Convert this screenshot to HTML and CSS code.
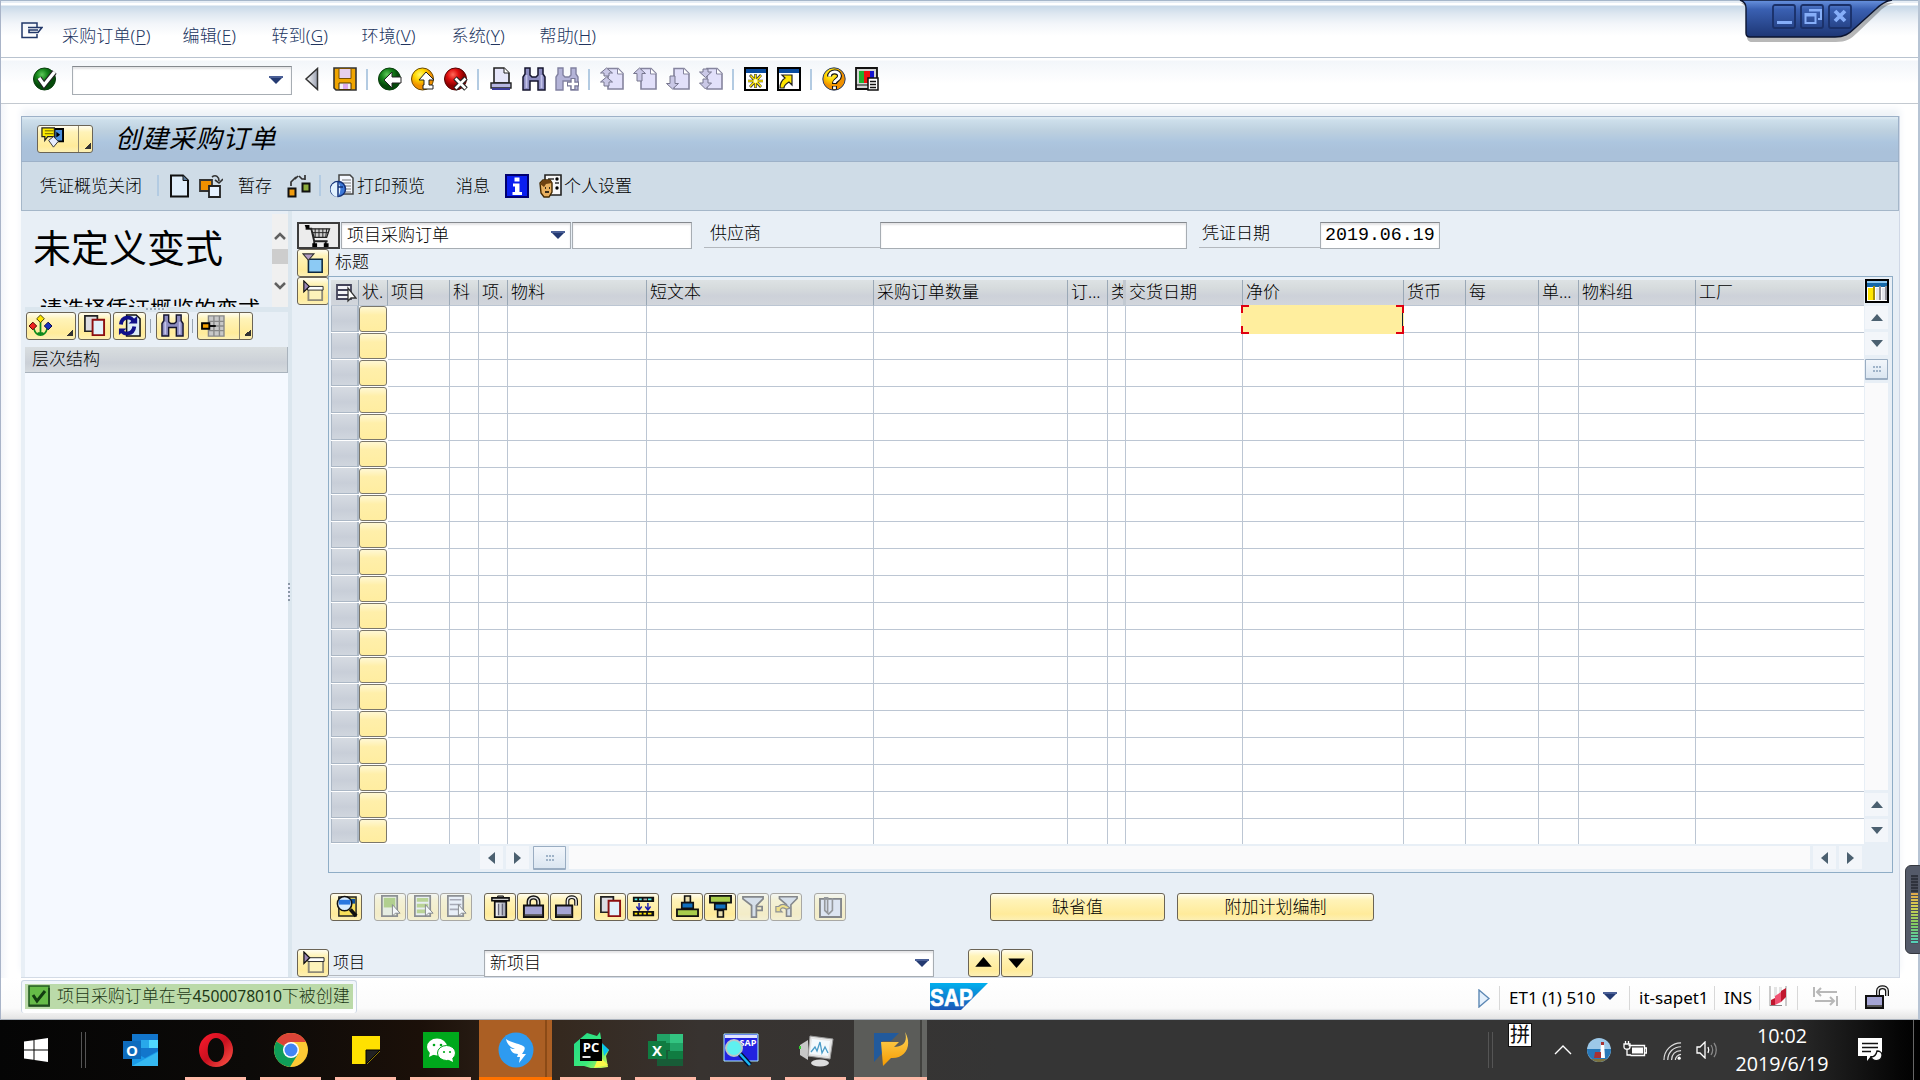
FILE: index.html
```html
<!DOCTYPE html>
<html lang="zh-CN">
<head>
<meta charset="utf-8">
<title>创建采购订单</title>
<link rel="stylesheet" href="styles.css">
</head>
<body>
<svg class="defs" width="0" height="0" aria-hidden="true">
  <defs>
    <radialGradient id="gGreen" cx=".38" cy=".3"><stop offset="0" stop-color="#5fc95a"/><stop offset=".5" stop-color="#16861b"/><stop offset="1" stop-color="#054a0a"/></radialGradient>
    <radialGradient id="gYellow" cx=".38" cy=".3"><stop offset="0" stop-color="#fff76a"/><stop offset=".5" stop-color="#ffd800"/><stop offset="1" stop-color="#f09000"/></radialGradient>
    <radialGradient id="gRed" cx=".38" cy=".3"><stop offset="0" stop-color="#ff6b5a"/><stop offset=".5" stop-color="#e01010"/><stop offset="1" stop-color="#8c0000"/></radialGradient>
    <linearGradient id="gSap" x1="0" y1="0" x2="0" y2="1"><stop offset="0" stop-color="#00b0ee"/><stop offset="1" stop-color="#1c56b6"/></linearGradient>
    <linearGradient id="gTab" x1="0" y1="0" x2="0" y2="1"><stop offset="0" stop-color="#6a94e0"/><stop offset=".25" stop-color="#3a60b2"/><stop offset="1" stop-color="#1d3674"/></linearGradient>
    <linearGradient id="gOpera" x1="0" y1="0" x2="1" y2="1"><stop offset="0" stop-color="#ff1b2d"/><stop offset=".5" stop-color="#c8101f"/><stop offset="1" stop-color="#ff5a4a"/></linearGradient>
    <linearGradient id="gGold" x1="0" y1="0" x2="0" y2="1"><stop offset="0" stop-color="#ffd65a"/><stop offset="1" stop-color="#f59a00"/></linearGradient>
    <linearGradient id="gPy" x1="0" y1="0" x2="1" y2="1"><stop offset="0" stop-color="#21d789"/><stop offset=".6" stop-color="#3bea7a"/><stop offset="1" stop-color="#fcf84a"/></linearGradient>
    <linearGradient id="gMetal" x1="0" y1="0" x2="1" y2="0"><stop offset="0" stop-color="#fff"/><stop offset="1" stop-color="#9aa0b0"/></linearGradient>
    <symbol id="ok" viewBox="0 0 24 24"><circle cx="11.500" cy="12" r="11" fill="url(#gGreen)" stroke="#063c0a"/><path d="M6 11l5 7L21.500 5" fill="none" stroke="#222" stroke-width="5.500"/><path d="M6 11l5 7L21.500 5" fill="none" stroke="#fff" stroke-width="3.400"/></symbol>
    <symbol id="back" viewBox="0 0 24 24"><path d="M17.500 1.500v21L6 12z" fill="url(#gMetal)" stroke="#333" stroke-width="1.500"/></symbol>
    <symbol id="save" viewBox="0 0 24 24"><path d="M1 1h22v22H3l-2-2z" fill="#f0a500" stroke="#333" stroke-width="1.600"/><path d="M6 1.500h12v10H6z" fill="#e6d0ec" stroke="#7a5200"/><path d="M6 16h12v6.500H6z" fill="#f5eef5" stroke="#4a3200"/><path d="M10 17h5v5h-5z" fill="#dca8ec"/></symbol>
    <symbol id="gback" viewBox="0 0 24 24"><circle cx="11.500" cy="12" r="11" fill="url(#gGreen)" stroke="#063c0a"/><path d="M6 13l8-8v5h9v6h-9v5z" fill="#fff" stroke="#222"/></symbol>
    <symbol id="yup" viewBox="0 0 24 24"><circle cx="11.500" cy="12" r="11" fill="url(#gYellow)" stroke="#6a4a00"/><path d="M15 5l8 8h-5v5h4v4H12v-4h1v-5H8z" fill="#fff" stroke="#222"/></symbol>
    <symbol id="rx" viewBox="0 0 24 24"><circle cx="11.500" cy="12" r="11" fill="url(#gRed)" stroke="#500"/><path d="M11 11l11 11M22 11L11 22" stroke="#222" stroke-width="5"/><path d="M11.500 11.500l10 10M21.500 11.500l-10 10" stroke="#fff" stroke-width="2.700"/></symbol>
    <symbol id="print" viewBox="0 0 24 24"><path d="M5 1h10l5 5v10H5z" fill="#e6e6fa" stroke="#222" stroke-width="1.600"/><path d="M15 1v5h5" fill="#fff" stroke="#222"/><path d="M2 16h20v5H2z" fill="#b6b6e0" stroke="#222" stroke-width="1.400"/><path d="M3 21h18v2H3z" fill="#3c3c98"/></symbol>
    <symbol id="find" viewBox="0 0 24 24"><path d="M3 1h5v7l2 2h4l2-2V1h5v6l2 3v13h-7v-9H8v9H1V10l2-3z" fill="#8c8cc0" stroke="#15152e" stroke-width="1.500"/><path d="M4.500 8v13M19.500 8v13" stroke="#c4c4ea" stroke-width="1.800"/></symbol>
    <symbol id="findp" viewBox="0 0 24 24"><path d="M3 1h5v7l2 2h4l2-2V1h5v6l2 3v13h-7v-9H8v9H1V10l2-3z" fill="#b4b4d8" stroke="#8080a0" stroke-width="1.400"/><path d="M18 11v12M12 17h12" stroke="#777796" stroke-width="5"/><path d="M18 12v10M13 17h10" stroke="#fff" stroke-width="2.600"/></symbol>
    <symbol id="pg" viewBox="0 0 24 24"><path d="M8 1.500h10l5 5V22H8z" fill="#e2e0fa" stroke="#85849e" stroke-width="1.600"/><path d="M17.500 1.500v5.500H23" fill="#fff" stroke="#85849e"/></symbol>
    <symbol id="p1" viewBox="0 0 24 24"><use href="#pg"/><path d="M6.500 1l6 5H9v3H4V6H.5zM6.500 10l6 5H9v4H4v-4H.5z" fill="#cac8e6" stroke="#77768e"/></symbol>
    <symbol id="p2" viewBox="0 0 24 24"><use href="#pg"/><path d="M6.500 1l6 5.500H9V14H4V6.500H.5z" fill="#cac8e6" stroke="#77768e"/></symbol>
    <symbol id="p3" viewBox="0 0 24 24"><use href="#pg"/><path d="M6.500 22l6-5.500H9V9H4v7.500H.5z" fill="#cac8e6" stroke="#77768e"/></symbol>
    <symbol id="p4" viewBox="0 0 24 24"><use href="#pg"/><path d="M4 2h5v3h3.500l-6 5.500L.5 5H4zM4 12h5v4h3.500l-6 6-6-6H4z" fill="#cac8e6" stroke="#77768e"/></symbol>
    <symbol id="w1" viewBox="0 0 24 24"><path d="M1 1h22v22H1z" fill="#fff" stroke="#000" stroke-width="2"/><path d="M2 2h20v4H2z" fill="#0a4ca0"/><path d="M11.500 7v14M4 14h15M6 8l11 12M17 8L6 20" stroke="#333" stroke-width="2.600"/><path d="M11.500 7.500v13M4 14h15M6.500 8.500l10.500 11M17 8.500L6 19.500" stroke="#ffe600" stroke-width="1.500"/><circle cx="11.500" cy="14" r="2" fill="#ffffc0"/></symbol>
    <symbol id="w2" viewBox="0 0 24 24"><path d="M1 1h22v22H1z" fill="#fff" stroke="#000" stroke-width="2"/><path d="M2 2h20v4H2z" fill="#0a4ca0"/><path d="M3 21c0-6 2-8 5-10l-3-3h10v10l-3-3c-3 2-5 3-5 6z" fill="#ffe600" stroke="#222" stroke-width="1.200"/></symbol>
    <symbol id="help" viewBox="0 0 24 24"><circle cx="12" cy="12" r="11.2" fill="url(#gYellow)" stroke="#27406e"/><path d="M7.500 9.500c0-6 10-6 10-.5 0 4-5 3.500-5 8M12.500 19v3.500" fill="none" stroke="#111" stroke-width="5"/><path d="M7.500 9.500c0-6 10-6 10-.5 0 4-5 3.500-5 7M12.500 19.500v2.500" fill="none" stroke="#fff" stroke-width="2.800"/></symbol>
    <symbol id="mon" viewBox="0 0 24 24"><path d="M1 1h21v21H1z" fill="#d4d4d4" stroke="#111" stroke-width="1.800"/><path d="M4 4h5v12H4z" fill="#20b030"/><path d="M9 4h6v12H9z" fill="#f01010"/><path d="M15 4h4v12h-4z" fill="#1414d0"/><path d="M1 18h14" stroke="#111"/><path d="M13 11h10v12H13z" fill="#fff" stroke="#111" stroke-width="1.500"/><path d="M15 14.500h6M15 17.500h6M15 20.500h6" stroke="#111" stroke-width="1.300"/></symbol>
    <symbol id="svc" viewBox="0 0 24 24"><path d="M14 2h9v13h-9z" fill="#4a90e0" stroke="#000" stroke-width="2"/><path d="M16 5v6l4-3z"/><path d="M1 1h13v9H7l-3 4v-4H1z" fill="#ffed00" stroke="#222" stroke-width="1.300"/><path d="M4 4h9M4 7h9" stroke="#665c00"/><path d="M8 14l5-4 5 5-5 6z" fill="#e6ecff" stroke="#333"/></symbol>
    <symbol id="doc" viewBox="0 0 24 24"><path d="M3 1.500h12l5 5v16H3z" fill="#e0eefa" stroke="#111" stroke-width="2"/><path d="M15 1.500v5h5" fill="#5a7a9a" stroke="#111"/></symbol>
    <symbol id="hold" viewBox="0 0 24 24"><path d="M1 6h12v11H1z" fill="#f09000" stroke="#333" stroke-width="1.800"/><path d="M10 12h11v11H10z" fill="#e6f2ff" stroke="#222" stroke-width="1.800"/><path d="M13 3c4-3 7 0 7 4M16 6l4 3 4-4" fill="none" stroke="#333" stroke-width="1.600"/></symbol>
    <symbol id="chk" viewBox="0 0 24 24"><path d="M1.500 14.500h7v8h-7z" fill="#f09c10" stroke="#111" stroke-width="2"/><path d="M15.500 9.500h7v8h-7z" fill="#8cac3c" stroke="#111" stroke-width="2"/><path d="M4 12V8l5-5M8 5l3-3M12 2l3 3h3M18 6V1" fill="none" stroke="#333" stroke-width="1.700"/></symbol>
    <symbol id="prev" viewBox="0 0 24 24"><path d="M9 1h11l3 3v16H9z" fill="#f4f8ff" stroke="#444" stroke-width="1.500"/><path d="M12 6h9M12 9h9M15 12h6M15 15h6M15 18h6" stroke="#777"/><circle cx="8" cy="15" r="7.500" fill="#3c78d8" stroke="#123078" stroke-width="1.500"/><path d="M8 8a13 13 0 010 15 7.500 7.500 0 010-15" fill="#e2f2ff"/><path d="M8 8v15M8 13h5" stroke="#123078" stroke-width="1.500"/></symbol>
    <symbol id="info" viewBox="0 0 24 24"><path d="M1 1h22v22H1z" fill="#0a1ef0" stroke="#000070" stroke-width="2"/><path d="M9.500 3.500h5v4h-5zM8 9.500h6.500V18H17v3H7.500v-3H10v-5.500H8z" fill="#fff"/></symbol>
    <symbol id="pers" viewBox="0 0 24 24"><path d="M7 1h16v20H7z" fill="#f8f8f8" stroke="#222" stroke-width="1.600"/><path d="M10 5h6M17 9h4" stroke="#333" stroke-width="1.500"/><circle cx="19" cy="5" r="1.700"/><circle cx="19" cy="14" r="1.700"/><path d="M2 9l3-3h7l2 3v9l-3 5H6l-3-4z" fill="#e8b060" stroke="#422800" stroke-width="1.400"/><path d="M2 10l3-4h7l2 3-6 1-2 3z" fill="#6e4212"/><path d="M7 14h1M11 14h1M7 18h4" stroke="#000" stroke-width="1.500"/></symbol>
    <symbol id="cart" viewBox="0 0 32 24"><path d="M3 2v3h5l3 13h14M11 18v5M23 18v5" fill="none" stroke="#222" stroke-width="2"/><path d="M1 1h5v4H3z"/><path d="M8 5h19l-3 9H11z" fill="#ccc" stroke="#222" stroke-width="1.300"/><path d="M12 5v9M16 5v9M20 5v9M24 5l-1 9M9 9h17" stroke="#222"/><path d="M9 20h5v4H9zM21 20h5v4h-5z"/></symbol>
    <symbol id="exp" viewBox="0 0 24 24"><path d="M7 8h15v14H7z" fill="#8ccaf4" stroke="#0d2740" stroke-width="1.700"/><path d="M1 2h12L7 9z" fill="#b49cc4" stroke="#333" stroke-width="1.200"/></symbol>
    <symbol id="col" viewBox="0 0 24 24"><path d="M7 10h15v12H7z" fill="#fdf3ba" stroke="#8f8a78" stroke-width="2"/><path d="M6 7h17v4H6z" fill="#fff" stroke="#222"/><path d="M2 1v12l6-6z" fill="#9a86b4" stroke="#111" stroke-width="1.300"/></symbol>
    <symbol id="tree" viewBox="0 0 24 24"><path d="M12 7v16M5 15c1 4 3 7 7 7s6-3 7-7M9 20h6" fill="none" stroke="#0c8a1c" stroke-width="1.800"/><path d="M12 1l4 4-4 4-4-4z" fill="#ffe600" stroke="#443c00"/><path d="M4 8.500l4 4-4 4-4-4z" fill="#f02020" stroke="#400"/><path d="M20 8.500l4 4-4 4-4-4z" fill="#1830c0" stroke="#004"/></symbol>
    <symbol id="copy" viewBox="0 0 24 24"><path d="M2 2h13v16H2z" fill="#dcdce2" stroke="#222" stroke-width="1.800"/><path d="M10 6h12v16H10z" fill="#e2f2fc" stroke="#8c1010" stroke-width="2"/></symbol>
    <symbol id="refr" viewBox="0 0 24 24"><path d="M9 1h10l4 4v18H9z" fill="#dcebf6" stroke="#111" stroke-width="1.600"/><path d="M3 11c1-9 12-9 13-3M17 13c-1 9-12 9-13 4" fill="none" stroke="#10108a" stroke-width="4"/><path d="M11 10h9V2zM9 15H1v7z" fill="#10108a"/></symbol>
    <symbol id="layout" viewBox="0 0 28 24"><path d="M9 1h17v22H9z" fill="#c8c8c8" stroke="#888" stroke-width="1.500"/><path d="M9 7h17M9 12h17M9 17h17M15 1v22M21 1v22" stroke="#888" stroke-width="1.500"/><path d="M2 9h8v6H2z" fill="#f5a000" stroke="#000" stroke-width="2"/><path d="M10 12h7" stroke="#000" stroke-width="2"/></symbol>
    <symbol id="selall" viewBox="0 0 24 24"><path d="M4 4h14v14H4z" fill="#f4f4f8" stroke="#44445a" stroke-width="1.800"/><path d="M4 9h14M4 14h14" stroke="#44445a" stroke-width="2"/><path d="M15 7v13l3-3h5z" fill="#fff" stroke="#333" stroke-width="1.300"/></symbol>
    <symbol id="cfg" viewBox="0 0 24 24"><path d="M1 1h22v22H1z" fill="#fff" stroke="#000" stroke-width="2"/><path d="M2 2h20v2H2z" fill="#8fc8f0"/><path d="M2 4h20v4H2z" fill="#1468a8"/><path d="M3 9h5v12H3z" fill="#ffe600"/><path d="M8 7h2v14H8z" fill="#a89000"/><path d="M14 7h2v14h-2zM20 7h2v14h-2z" fill="#909098"/><path d="M11 9h3v12h-3zM17 9h3v12h-3z" fill="#e4e6ec"/></symbol>
    <symbol id="det" viewBox="0 0 24 24"><path d="M4 2h18v20H4z" fill="#f8e05a" stroke="#222" stroke-width="1.500"/><path d="M15 4h6v5h-6z" fill="#0c50a0"/><circle cx="10" cy="9" r="7.500" fill="#d8ecff" stroke="#111" stroke-width="1.600"/><path d="M4 5h12v5H4z" fill="#2a78e0"/><path d="M16 15l6 7" stroke="#111" stroke-width="4"/></symbol>
    <symbol id="s1" viewBox="0 0 24 24"><path d="M3 1h16v21H3z" fill="#e4ecd0" stroke="#333" stroke-width="1.800"/><path d="M5 3h12v10H5z" fill="#7cb02a"/><path d="M14 10v12l3-3h5z" fill="#fff" stroke="#222"/></symbol>
    <symbol id="s2" viewBox="0 0 24 24"><path d="M3 1h16v21H3z" fill="#e8eef0" stroke="#333" stroke-width="1.800"/><path d="M5 3h12v4H5zM5 9h12v4H5zM5 15h10v4H5z" fill="#8cb838"/><path d="M14 10v12l3-3h5z" fill="#fff" stroke="#222"/></symbol>
    <symbol id="s3" viewBox="0 0 24 24"><path d="M3 1h16v21H3z" fill="#e8f0fa" stroke="#333" stroke-width="1.800"/><path d="M5 5h12M5 10h12M5 15h10" stroke="#667" stroke-width="1.600"/><path d="M14 10v12l3-3h5z" fill="#fff" stroke="#222"/></symbol>
    <symbol id="del" viewBox="0 0 24 24"><path d="M9 1h6v3H9z" fill="#888" stroke="#111"/><path d="M3 3h18v3H3z" fill="#ccc" stroke="#111" stroke-width="1.600"/><path d="M6 7h12v16H6z" fill="url(#gMetal)" stroke="#111" stroke-width="1.800"/><path d="M10 9v12M14 9v12" stroke="#667" stroke-width="1.400"/></symbol>
    <symbol id="lock" viewBox="0 0 24 24"><path d="M7 12V7c0-6 10-6 10 0v5" fill="none" stroke="#111" stroke-width="4.500"/><path d="M7 12V7c0-6 10-6 10 0v5" fill="none" stroke="#ddd" stroke-width="1.600"/><path d="M2 11h20v12H2z" fill="#a4a4d4" stroke="#111" stroke-width="2"/><path d="M3 21h18" stroke="#555" stroke-width="2"/></symbol>
    <symbol id="unlock" viewBox="0 0 24 24"><path d="M13 12V6c0-5 9-5 9 0v5" fill="none" stroke="#111" stroke-width="4"/><path d="M13 12V6c0-5 9-5 9 0v5" fill="none" stroke="#eee" stroke-width="1.500"/><path d="M1 11h17v12H1z" fill="#a4a4d4" stroke="#111" stroke-width="2"/><path d="M2 21h15" stroke="#555" stroke-width="2"/></symbol>
    <symbol id="dup" viewBox="0 0 26 24"><path d="M1 1h24v6H1zM1 17h24v6H1z" fill="#111"/><path d="M3 3h3v2H3zM8 3h3v2H8zM18 3h4v2h-4z" fill="#5ee"/><path d="M13 3h4v2h-4z" fill="#aaa"/><path d="M3 19h3v2H3zM8 19h3v2H8zM13 19h3v2h-3zM18 19h4v2h-4z" fill="#ffe600"/><path d="M8 8v7M5 12l3 4 3-4M18 8v7M15 12l3 4 3-4" fill="none" stroke="#1818b0" stroke-width="1.600"/></symbol>
    <symbol id="asc" viewBox="0 0 24 24"><path d="M9 1h6v7H9z" fill="#e8deb0" stroke="#111" stroke-width="1.700"/><path d="M6 8h12v6H6z" fill="#1070c0" stroke="#111" stroke-width="1.700"/><path d="M1 15h22v7H1z" fill="#a8cc4c" stroke="#111" stroke-width="1.900"/></symbol>
    <symbol id="desc" viewBox="0 0 24 24"><path d="M9 16h6v7H9z" fill="#e8deb0" stroke="#111" stroke-width="1.700"/><path d="M6 9h12v6H6z" fill="#1070c0" stroke="#111" stroke-width="1.700"/><path d="M1 1h22v7H1z" fill="#a8cc4c" stroke="#111" stroke-width="1.900"/></symbol>
    <symbol id="fil" viewBox="0 0 24 24"><path d="M1 2h21v2l-7 7v12h-5V11L1 4z" fill="#c4d0e0" stroke="#222" stroke-width="1.800"/><path d="M15 12h6v4h-6" fill="none" stroke="#222" stroke-width="1.800"/></symbol>
    <symbol id="unf" viewBox="0 0 26 24"><path d="M5 1h20v2l-7 7v13h-5V10L5 3z" fill="#c4d0e0" stroke="#222" stroke-width="1.800"/><path d="M1 12l3 0c4-4 9-2 13 2l-4 1c-4-2-6-2-7 1l2 2H1z" fill="#f4d020" stroke="#333" stroke-width="1.300"/></symbol>
    <symbol id="clip" viewBox="0 0 24 24"><path d="M1 4h22v19H1z" fill="#d4dcf0" stroke="#222" stroke-width="2"/><path d="M6 17V3h3v16M14 3v13l-4 4-4-4" fill="none" stroke="#444" stroke-width="1.700"/></symbol>
    <symbol id="caret" viewBox="0 0 14 8"><path d="M0 0h14v2H0z" fill="#4a5f96"/><path d="M1 2h12L7 8z" fill="#243a72"/></symbol>
    <symbol id="tri" viewBox="0 0 12 8"><path d="M6 0l6 7H0z"/></symbol>
  </defs>
</svg>

<div class="window">
  <nav class="menubar">
    <svg class="exit" viewBox="0 0 22 17"><path d="M16 5V1H1v14.500h15V12" fill="none" stroke="#22386a" stroke-width="1.500"/><path d="M7 5.500h14l-4 5H8V8h9" fill="none" stroke="#22386a" stroke-width="1.600"/></svg>
    <span>采购订单(<u>P</u>)</span><span>编辑(<u>E</u>)</span><span>转到(<u>G</u>)</span><span>环境(<u>V</u>)</span><span>系统(<u>Y</u>)</span><span>帮助(<u>H</u>)</span>
  </nav>
  <div class="toolbar">
    <svg class="i"><use href="#ok"/></svg>
    <div class="field command"><svg class="caret"><use href="#caret"/></svg></div>
    <svg class="i"><use href="#back"/></svg><svg class="i"><use href="#save"/></svg><i class="sep"></i>
    <svg class="i"><use href="#gback"/></svg><svg class="i"><use href="#yup"/></svg><svg class="i"><use href="#rx"/></svg><i class="sep"></i>
    <svg class="i"><use href="#print"/></svg><svg class="i"><use href="#find"/></svg><svg class="i"><use href="#findp"/></svg><i class="sep"></i>
    <svg class="i"><use href="#p1"/></svg><svg class="i"><use href="#p2"/></svg><svg class="i"><use href="#p3"/></svg><svg class="i"><use href="#p4"/></svg><i class="sep"></i>
    <svg class="i"><use href="#w1"/></svg><svg class="i"><use href="#w2"/></svg><i class="sep"></i>
    <svg class="i"><use href="#help"/></svg><svg class="i"><use href="#mon"/></svg>
  </div>

  <main class="stage">
    <header class="titlebar">
      <div class="btn split service"><svg class="i"><use href="#svc"/></svg><b class="corner ruled"></b></div>
      <h1>创建采购订单</h1>
    </header>
    <div class="actions">
      <span class="a-close">凭证概览关闭</span><i class="sep"></i>
      <svg class="i"><use href="#doc"/></svg><svg class="i"><use href="#hold"/></svg>
      <span class="a-park">暂存</span><svg class="i"><use href="#chk"/></svg><i class="sep"></i>
      <svg class="i"><use href="#prev"/></svg><span class="a-print">打印预览</span><span class="a-msg">消息</span>
      <svg class="i"><use href="#info"/></svg><svg class="i"><use href="#pers"/></svg><span>个人设置</span>
    </div>

    <div class="work">
      <aside class="overview">
        <div class="hint">
          <div class="hint-text"><p class="big">未定义变式</p><p class="mid">请选择凭证概览的变式</p></div>
          <div class="winscroll"><svg viewBox="0 0 12 8"><path d="M1 7l5-5 5 5" /></svg><b></b><svg viewBox="0 0 12 8"><path d="M1 1l5 5 5-5"/></svg></div>
        </div>
        <div class="grip"></div>
        <div class="treebar">
          <div class="btn split tree"><svg class="i"><use href="#tree"/></svg><b class="corner"></b></div>
          <div class="btn sq"><svg class="i"><use href="#copy"/></svg></div>
          <div class="btn sq"><svg class="i"><use href="#refr"/></svg></div><i class="thin"></i>
          <div class="btn sq"><svg class="i"><use href="#find"/></svg></div><i class="thin"></i>
          <div class="btn split lay"><svg class="i wide"><use href="#layout"/></svg><b class="corner ruled"></b></div>
        </div>
        <div class="treehead">层次结构</div>
        <div class="treebody"></div>
      </aside>
      <div class="splitter"><i></i></div>

      <section class="order">
        <div class="head">
          <div class="cartbtn"><svg><use href="#cart"/></svg></div>
          <div class="field type">项目采购订单<svg class="caret"><use href="#caret"/></svg></div>
          <div class="field number"></div>
          <label class="vendor-l">供应商</label><div class="field vendor"></div>
          <label class="date-l">凭证日期</label><div class="field date">2019.06.19</div>
        </div>
        <div class="body">
          <div class="toggles"><div class="btn"><svg class="i"><use href="#exp"/></svg></div><div class="btn"><svg class="i"><use href="#col"/></svg></div></div>
          <div class="items">
            <div class="section">标题</div>
            <div class="frame">
              <div class="grid-area">
                <div class="row thead">
                  <span class="pick"><svg class="i"><use href="#selall"/></svg></span><span>状.</span><span>项目</span><span>科</span><span>项.</span><span>物料</span><span>短文本</span><span>采购订单数量</span><span>订...</span><span class="cut">类</span><span>交货日期</span><span>净价</span><span>货币</span><span>每</span><span>单...</span><span>物料组</span><span>工厂</span>
                </div>
                <div id="rows"></div>
                <div class="hscroll"><i class="arr l"></i><i class="arr r"></i><i class="thumb"></i><i class="track"></i><i class="arr l"></i><i class="arr r"></i></div>
              </div>
              <div class="vscroll"><svg class="i"><use href="#cfg"/></svg><i class="arr u"></i><i class="arr d"></i><i class="thumb"></i><i class="track"></i><i class="arr u"></i><i class="arr d"></i></div>
            </div>
          </div>
        </div>
        <div class="tools">
          <div class="grp"><div class="btn"><svg class="i"><use href="#det"/></svg></div></div>
          <div class="grp off"><div class="btn"><svg class="i"><use href="#s1"/></svg></div><div class="btn"><svg class="i"><use href="#s2"/></svg></div><div class="btn"><svg class="i"><use href="#s3"/></svg></div></div>
          <div class="grp"><div class="btn"><svg class="i"><use href="#del"/></svg></div><div class="btn"><svg class="i"><use href="#lock"/></svg></div><div class="btn"><svg class="i"><use href="#unlock"/></svg></div></div>
          <div class="grp"><div class="btn"><svg class="i"><use href="#copy"/></svg></div><div class="btn"><svg class="i"><use href="#dup"/></svg></div></div>
          <div class="grp"><div class="btn"><svg class="i"><use href="#asc"/></svg></div><div class="btn"><svg class="i"><use href="#desc"/></svg></div><div class="btn off"><svg class="i"><use href="#fil"/></svg></div><div class="btn off"><svg class="i"><use href="#unf"/></svg></div></div>
          <div class="grp off"><div class="btn"><svg class="i"><use href="#clip"/></svg></div></div>
          <div class="btn defaults">缺省值</div><div class="btn planning">附加计划编制</div>
        </div>
        <div class="detail">
          <div class="btn"><svg class="i"><use href="#col"/></svg></div><label>项目</label>
          <div class="field item">新项目<svg class="caret"><use href="#caret"/></svg></div>
          <div class="btn nav"><svg><use href="#tri"/></svg></div><div class="btn nav down"><svg><use href="#tri"/></svg></div>
        </div>
      </section>
    </div>
  </main>

  <footer class="status">
    <div class="message"><div><svg viewBox="0 0 22 22"><path d="M1 1h20v20H1z" fill="#66bb48" stroke="#245c22" stroke-width="1.600"/><path d="M1 20.500h20V3" fill="none" stroke="#1f4a1c" stroke-width="2"/><path d="M5 10l4 6 8-10" fill="none" stroke="#123c10" stroke-width="3"/></svg><span>项目采购订单在号<em>4500078010</em>下被创建</span></div></div>
    <svg class="sap" viewBox="0 0 58 27"><path d="M0 0h58L31 27H0z" fill="url(#gSap)"/><text x="0" y="23" textLength="43" lengthAdjust="spacingAndGlyphs">SAP</text></svg>
    <div class="sys">
      <svg class="play" viewBox="0 0 12 19"><path d="M1 1l10 8.500L1 18z" fill="#e4f0fc" stroke="#5d88b4" stroke-width="1.400"/></svg>
      <span class="c1">ET1 (1) 510 <svg class="caret"><use href="#caret"/></svg></span>
      <span class="c2">it-sapet1</span><span class="c3">INS</span>
      <span class="c4"><svg viewBox="0 0 18 20"><path d="M1 0v20M17 0v20" stroke="#999"/><path d="M5 1h3v10H5zM10 1h3v6h-3z" fill="#e4e4e4"/><path d="M2 19v-5l4-2v7z" fill="#c0182e"/><path d="M6 19v-9l6-4v10z" fill="#f05070"/><path d="M12 16V5l5-3v9z" fill="#c0182e"/><path d="M1 19.500h12" stroke="#888"/></svg></span>
      <span class="c5"><svg viewBox="0 0 25 19"><path d="M1 0v10M4 5h20M8 1L4 5l4 4M24 9v10M2 14h19M17 10l4 4-4 4" fill="none" stroke="#b8b8b8" stroke-width="2"/></svg></span>
      <span class="c6"><svg class="i"><use href="#unlock"/></svg></span>
    </div>
  </footer>
</div>

<div class="taskbar">
  <div class="start"><svg viewBox="0 0 24 24"><path d="M0 3.500l9.500-1.300v9.300H0zM10.500 2L24 0v11.500H10.500zM0 12.500h9.500v9.300L0 20.500zM10.500 12.500H24V24l-13.500-2z" fill="#fff"/></svg></div>
  <div class="bars"></div>
  <div class="apps">
    <div class="app plain"><svg viewBox="0 0 36 36"><path d="M9 2h26v30H9z" fill="#1276cc"/><path d="M18 8h8v8h-8z" fill="#28a8ea"/><path d="M26 8h9v8h-9z" fill="#50d9ff"/><path d="M9 19l13 7 13-7v15H9z" fill="#1a9be8"/><path d="M9 34l26-14v14z" fill="#35b8f1"/><path d="M0 9h18v18H0z" fill="#0f6cbd"/><text x="9" y="23.500" class="tl">O</text></svg></div>
    <div class="app"><svg viewBox="0 0 36 36"><path fill-rule="evenodd" d="M18 1a17 17 0 0 1 0 34a17 17 0 0 1 0-34zM18 6c-11 0-11 24 0 24s11-24 0-24z" fill="url(#gOpera)"/></svg></div>
    <div class="app"><svg viewBox="0 0 36 36"><circle cx="18" cy="18" r="17" fill="#fcc934"/><path d="M18 18L3.300 9.500A17 17 0 0 1 33 10H18z" fill="#db4437"/><path d="M3.300 9.500A17 17 0 0 0 17 35l8-13-7-4z" fill="#0f9d58"/><circle cx="18" cy="18" r="8" fill="#fff"/><circle cx="18" cy="18" r="6.500" fill="#4285f4"/></svg></div>
    <div class="app"><svg viewBox="0 0 36 36"><path d="M4 4h28v15L19 32H4z" fill="#ffe100"/><path d="M18 18h14L18 32z" fill="#222" stroke="#000"/></svg></div>
    <div class="app"><svg viewBox="0 0 36 36"><path d="M0 0h36v36H0z" fill="#00a81c"/><ellipse cx="14" cy="15" rx="10" ry="8.500" fill="#fff"/><path d="M7 20l-1 5 6-3z" fill="#fff"/><ellipse cx="23.500" cy="21" rx="9" ry="7.500" fill="#fff" stroke="#00a81c"/><path d="M29 25l1 5-6-3z" fill="#fff"/><g fill="#00a81c"><circle cx="11" cy="13" r="1.300"/><circle cx="18" cy="13" r="1.300"/><circle cx="21" cy="20" r="1.100"/><circle cx="27" cy="20" r="1.100"/></g></svg></div>
    <div class="app hot"><svg viewBox="0 0 36 36"><circle cx="18" cy="18" r="17.500" fill="#2e9bf0"/><path d="M8 7c5 4 14 5 17 7 4 2 0 6-1 8h4l-7 9 1-6h-3l1-3c-5 0-7-3-8-6 2 1 4 1 5 1-5-2-8-5-9-10z" fill="#fff"/></svg></div>
    <div class="app"><svg viewBox="0 0 36 36"><path d="M1 12L14 1l10 3 3-4 2 12 7 6-3 6 2 11-14 2-10-3H1z" fill="url(#gPy)"/><path d="M29 11l7 7-5 6z" fill="#07c3f2"/><path d="M26 24l9 9-14 3z" fill="#fcf84a"/><path d="M7 7h22v22H7z" fill="#000"/><text x="18" y="19.500" class="tl pc">PC</text><path d="M9.500 25h8" stroke="#fff" stroke-width="1.800"/></svg></div>
    <div class="app"><svg viewBox="0 0 36 36"><path d="M9 2h26v32H9z" fill="#185c37"/><path d="M9 2h13v9H9z" fill="#21a366"/><path d="M22 2h13v9H22z" fill="#33c481"/><path d="M9 11h13v7H9z" fill="#107c41"/><path d="M22 11h13v8H22z" fill="#21a366"/><path d="M20 19h15v8H20z" fill="#107c41"/><path d="M0 9h18v18H0z" fill="#107c41"/><text x="9" y="23.500" class="tl">X</text></svg></div>
    <div class="app"><svg viewBox="0 0 36 36"><path d="M1 2h34v27H1z" fill="#2222e0" stroke="#aef"/><path d="M2 3h32v3H2z" fill="#dfe4ff"/><text x="25" y="14" class="tl mini">SAP</text><circle cx="11" cy="16" r="8" fill="#5ef0f0" stroke="#b8c8c8" stroke-width="2"/><path d="M17 22l10 11" stroke="#013" stroke-width="5"/><path d="M17 22l10 11" stroke="#1bb8f4" stroke-width="2.500"/></svg></div>
    <div class="app"><svg viewBox="0 0 36 36"><path d="M2 13l8-5v20l-8-5z" fill="#c8c8c8"/><path d="M12 4l23 3-3 20-22-3z" fill="#e4e4e4" stroke="#999"/><path d="M14 7l18 2-2 15-18-2z" fill="#f4fafd"/><path d="M13 20l4-5 2 4 3-9 2 11 3-6 3 6" fill="none" stroke="#4a9cc8" stroke-width="1.300"/><ellipse cx="22" cy="31" rx="9" ry="3.500" fill="#ddd"/><path d="M2 14v3" stroke="#3c3" stroke-width="2"/></svg></div>
    <div class="app on"><svg viewBox="0 0 36 36"><path d="M1 1h25l-8 8h-9v12l-8 9z" fill="#225a9c"/><path d="M8 10h18l-5 5c9 0 14-5 11-15 8 14 0 27-14 26l-8 8z" fill="url(#gGold)"/></svg></div>
  </div>
  <div class="tray">
    <div class="bars"></div>
    <div class="ime">拼</div>
    <svg class="t-up" viewBox="0 0 18 10"><path d="M1 9l8-8 8 8" fill="none" stroke="#fff" stroke-width="1.400"/></svg>
    <svg class="t-av" viewBox="0 0 24 24"><circle cx="12" cy="12" r="12" fill="#9cc8e8"/><path d="M0 11h24a12 12 0 0 1-24 1z" fill="#2878b8"/><path d="M14 5h3l1 15h-5z" fill="#fff"/><path d="M14 4h3v3h-3zM8 14h6v6H7z" fill="#a83232"/><path d="M4 21h16a12 12 0 0 1-16 0z" fill="#7a7240"/></svg>
    <svg class="t-bat" viewBox="0 0 24 18"><path d="M5.500 5.500h16v10h-14M22 8h1.500v5H22" fill="none" stroke="#fff" stroke-width="1.400"/><path d="M9 7.500h11v6H9z" fill="#fff"/><path d="M1 4h6v3c0 3-6 3-6 0zM2.500 1v3M5.500 1v3M4 9v6h4" fill="none" stroke="#fff" stroke-width="1.300"/></svg>
    <svg class="t-wifi" viewBox="0 0 20 20"><g fill="none" stroke="#ddd" stroke-width="1.300"><path d="M1 19C1 9 9 1 19 1M5 19C5 11 11 5 19 5M9 19c0-6 4-10 10-10M13 19c0-3 3-6 6-6"/></g><circle cx="17" cy="17" r="1.700" fill="#fff"/></svg>
    <svg class="t-vol" viewBox="0 0 22 18"><g fill="none" stroke="#fff" stroke-width="1.300"><path d="M1 6h3l5-5v16l-5-5H1z"/><path d="M12 6c1 2 1 4 0 6"/><path d="M15 4c2 3 2 7 0 10M18 2c3 4 3 10 0 14" stroke="#888"/></g></svg>
    <div class="clock"><span>10:02</span><span>2019/6/19</span></div>
    <svg class="t-note" viewBox="0 0 24 24"><path d="M0 0h24v18H13l-4 5v-5H0z" fill="#fff"/><path d="M4 5.500h16M4 9.500h16M4 13.500h9" stroke="#111" stroke-width="1.500"/><path d="M19 13c-1 5-3 6-6 6 3 6 11 4 11-2 0-2-2-4-5-4z" fill="#fff" stroke="#111" stroke-width="1.300"/></svg>
    <div class="desk"></div>
  </div>
</div>

<svg class="wintab" viewBox="0 0 180 46"><path d="M6 0c3 2 6 4 6 8v26c0 3 2 5 5 5h84c10 0 15-3 21-9l21-20c5-5 8-8 16-10z" fill="#000" opacity=".28" transform="translate(0 3)"/><path d="M5 0c3 1 6 3 6 8v25c0 3 2 4 4 4h85c9 0 14-3 20-9l21-19c5-5 9-8 16-9z" fill="url(#gTab)" stroke="#0b1430" stroke-width="1.400"/><g transform="translate(1 0)" fill="none" stroke="#1a3068" stroke-width="1.800"><rect x="37" y="5" width="22" height="23" rx="2"/><rect x="65" y="5" width="22" height="23" rx="2"/><rect x="93" y="5" width="22" height="23" rx="2"/></g><g transform="translate(1 0)" fill="none" stroke="#86aef8" stroke-width="2"><path d="M41 22.500h15" stroke-width="3"/><path d="M69.500 14h10v9h-10zM69 15.500h11M73 10h12v9h-3M73 10.500h12"/><path d="M99 11l10 10M109 11L99 21" stroke-width="3.800"/></g></svg>
<div class="meter"><i></i></div>

<script>
  const rows = document.getElementById('rows');
  for (let r = 0; r < 20; r++) {
    const row = document.createElement('div');
    row.className = 'row';
    for (let c = 0; c < 17; c++) row.appendChild(document.createElement('span'));
    if (r === 0) row.children[11].className = 'active';
    rows.appendChild(row);
  }
</script>
</body>
</html>
```
FILE: styles.css
```css
* { box-sizing: border-box; }
body { margin: 0; width: 1920px; height: 1080px; overflow: hidden; position: relative; font: 300 17px/20px "Noto Sans", "Noto Sans CJK SC", sans-serif; color: #000; background: #fff; }
h1, p { margin: 0; }
svg { display: block; flex: none; }
.defs { position: absolute; }
.i { width: 24px; height: 24px; }
.caret { width: 14px; height: 8px; }

.window { height: 1020px; display: flex; flex-direction: column; border-left: 1px solid #a9b4c8; border-right: 2px solid #b7c4d4; border-bottom: 1px solid #aab2bc; background: linear-gradient(90deg, #f4f6fa, #fff 8px); }
.menubar { height: 58px; flex: none; display: grid; grid-template-columns: 41px 120.5px 89px 90px 90px 88px auto; padding: 14px 0 0 20px; align-items: center; border-bottom: 1px solid #b9c3cf; color: #22355f; background: linear-gradient(#a5b6ca 0 1px, #e6edf5 1px 3px, #fff 3px 5px, #c7d8e8 6px, #dfe8f1 14px, #f3f6fa 24px, #fff 36px); }
.menubar span { white-space: nowrap; letter-spacing: .15px; }
.menubar u { text-underline-offset: 2px; }
.exit { width: 22px; height: 17px; margin-bottom: 11px; }
.toolbar { height: 46px; flex: none; display: flex; gap: 9px; align-items: center; padding: 0 0 3px 32px; border-bottom: 1px solid #c3c9d0; background: linear-gradient(#fff 2px, #f3f6fa 3px, #fff 26px); }
.sep { width: 2px; height: 21px; margin-right: 1px; background: #b3cbe2; flex: none; }
.field { background: #fff; border: 1px solid #a7adb3; border-top-color: #85898e; box-shadow: inset 0 2px 2px #e4e4e6; display: flex; align-items: center; height: 27px; }
.field .caret { margin-left: auto; }
.command { width: 220px; height: 29px; margin: 2px -1px 0 6px; padding-right: 8px; }

.stage { margin: 12px 18px 0 20px; height: 862px; flex: none; display: flex; flex-direction: column; border-bottom: 1px solid #d3dbe6; border-right: 1px solid #d0d8e6; background: #e8eff6; box-shadow: 0 -7px 7px #eff3f8; }
.titlebar { height: 46px; display: flex; align-items: center; padding-left: 15px; border: 1px solid #9db1c8; background: linear-gradient(#dce9f2 1px, #cddfeb 3px, #bdd0df 14px, #adc6df 25px, #aac1da 34px, #aac1da); }
.titlebar h1 { font-size: 26px; font-weight: 400; font-style: italic; line-height: 30px; margin: -2px 0 0 22px; letter-spacing: .9px; }
.btn { height: 28px; width: 32px; border: 1.500px solid #6b6455; border-radius: 3px; background: linear-gradient(#fffdf0, #fff3b8 6px, #ffeb9a 20px, #fdf0b4); display: flex; align-items: center; justify-content: center; flex: none; line-height: 22px; padding-bottom: 1px; }
.btn .i { width: 23px; height: 23px; }
.split { width: 56px; justify-content: flex-start; padding: 0 0 0 3px; }
.split b { margin-left: auto; align-self: stretch; width: 14px; background: linear-gradient(135deg, transparent 50%, #333 50%) 5px 16px / 7px 7px no-repeat; }
.split .ruled { border-left: 1px solid #8d866e; }
.service .i { margin-top: -2px; }
.actions { height: 49px; display: flex; align-items: center; border: 1px solid #a5b7c9; border-top: 0; background: #cfdce7; padding: 0 0 1px 18px; white-space: nowrap; }
.a-close { width: 117px; }
.actions .sep { margin: 0; }
.actions .sep + .i { margin: 0 0 0 9px; }
.a-close + .sep + .i + .i { margin-left: 7px; }
.a-park { margin-left: 15px; width: 49px; }
.a-park + .i + .sep { margin-left: 8px; }
.a-print { margin-left: 3px; width: 99px; }
.a-msg { width: 49px; }
.a-msg + .i { margin-right: 9px; }
.actions span:last-child { margin-left: 2px; }

.work { flex: 1; display: flex; padding-left: 4px; min-height: 0; }
.overview { width: 263px; display: flex; flex-direction: column; }
.hint { height: 96px; display: flex; }
.hint-text { flex: 1; overflow: hidden; padding: 11px 0 0 8px; white-space: nowrap; font-weight: 400; }
.big { font-size: 38px; line-height: 50px; }
.mid { font-size: 22px; line-height: 30px; margin: 21px 0 0 7px; }
.winscroll { width: 16px; margin-top: 3px; background: #f0f0f0; display: flex; flex-direction: column; align-items: center; }
.winscroll svg { width: 12px; height: 8px; fill: none; stroke: #606060; stroke-width: 2.500; margin-top: 18px; }
.winscroll b { width: 16px; height: 15px; background: #cdcdcd; margin-top: 9px; }
.grip { height: 5px; background: repeating-linear-gradient(90deg, #9caab8 0 2px, #e6edf3 2px 4px) 121px 1px / 20px 2px no-repeat, #dbe6ee; }
.treebar { height: 35px; display: flex; align-items: center; padding: 0 0 8px 1px; gap: 2px; }
.tree { width: 50px; padding-left: 2px; }
.sq { width: 33px; }
.thin { width: 1px; height: 14px; margin: 0 3px 0 2px; background: #98a4b0; }
.thin ~ .thin { margin: 0 2px 0 1px; }
.lay { width: 56px; padding-left: 1px; }
.lay b { width: 13px; background-position-x: 4px; }
.btn .wide { width: 28px; height: 22px; }
.treehead { height: 26px; padding: 2px 6px 0 7px; border: 1px solid #a9b3bd; border-width: 0 1px 1px 0; background: linear-gradient(#d9dee0, #cbd0d7 16px, #d5dade); }
.treebody { flex: 1; background: #f5f9ff; }
.splitter { width: 4px; background: #dbe6ee; display: flex; align-items: center; }
.splitter i { width: 2px; height: 18px; margin-top: -4px; background: repeating-linear-gradient(#8a98a6 0 2px, #eef 2px 4px); }

.order { flex: 1; padding: 11px 0 0 5px; display: flex; flex-direction: column; }
.head { height: 27px; display: flex; white-space: nowrap; }
.head .field { padding: 0 5px 2px 5px; }
.cartbtn { width: 43px; height: 27px; border: 2px solid #3c3c3c; background: #ececec; display: flex; justify-content: center; }
.cartbtn svg { width: 32px; height: 23px; }
.type { width: 230px; margin-left: 1px; }
.number { width: 120px; margin-left: 1px; }
.head label { border-bottom: 1px solid #b3b8be; padding: 1px 0 0 6px; height: 26px; flex: none; }
.vendor-l { margin-left: 12px; width: 176px; }
.vendor { width: 307px; }
.head .date-l { margin-left: 12px; width: 121px; padding-left: 3px; }
.head .date { width: 120px; padding: 0 0 1px 4px; font: 400 18.300px "Liberation Mono", monospace; }
.body { display: flex; }
.toggles { width: 31px; }
.toggles .i { width: 22px; height: 22px; }
.section { height: 27px; padding: 3px 0 0 7px; }
.frame { width: 1565px; height: 597px; border: 1px solid #8fadc6; padding: 3px 0 0 2px; display: flex; gap: 1px; }
.grid-area { width: 1533px; }
.row { display: grid; grid-template-columns: 28px 29px 62px 29px 29px 139px 227px 194px 40px 18px 117px 161px 62px 73px 40px 117px 168px; height: 27px; background: #fff; }
.row span { border-right: 1px solid #bcc6d3; border-bottom: 1px solid #bcc6d3; min-width: 0; }
.row span:last-child { border-right: 0; }
.row:last-child { height: 25px; }
.row:last-child span { border-bottom: 0; }
#rows span:first-child { background: linear-gradient(#d6dbe2, #c8ced8 60%, #d0d6de); border: 1px solid #abb7c5; border-width: 0 2px 1px 1px; margin-bottom: 1px; }
#rows span:nth-child(2) { background: linear-gradient(#fff8d4, #ffefaa 8px, #ffeda0); border: 1.500px solid #7b776b; border-radius: 3px; margin: 0 1px 1px 0; }
.thead.row { height: 26px; background: linear-gradient(#dde2e4, #d6dbdd 8px, #cdd1d9 16px, #d2d6dc); }
.thead span { padding: 2px 0 0 3px; white-space: nowrap; overflow: hidden; border-right-color: #9aa8b6; }
.thead .pick { padding: 1px 2px; }
.thead .cut { border-right-width: 3px; border-right-color: #c2c9d1; }
#rows .active { margin: -1px 0 -1px -2px; z-index: 1; border: 0; --r: #e00010; background:
  linear-gradient(var(--r), var(--r)) 0 0 / 8px 2px, linear-gradient(var(--r), var(--r)) 0 0 / 2px 8px,
  linear-gradient(var(--r), var(--r)) 100% 0 / 8px 2px, linear-gradient(var(--r), var(--r)) 100% 0 / 2px 8px,
  linear-gradient(var(--r), var(--r)) 0 100% / 8px 2px, linear-gradient(var(--r), var(--r)) 0 100% / 2px 8px,
  linear-gradient(var(--r), var(--r)) 100% 100% / 8px 2px, linear-gradient(var(--r), var(--r)) 100% 100% / 2px 8px,
  linear-gradient(#123, #123) calc(100% - 1px) 50% / 1px 21px, #ffee9e; background-repeat: no-repeat; }
.arr { width: 23px; height: 23px; background: #f3f6fa; display: flex; align-items: center; justify-content: center; flex: none; }
.arr::after { content: ""; border: 6px solid transparent; }
.u::after { border-bottom: 7px solid #4b6070; border-top: 0; }
.d::after { border-top: 7px solid #4b6070; border-bottom: 0; }
.l::after { border-right: 7px solid #4b6070; border-left: 0; }
.r::after { border-left: 7px solid #4b6070; border-right: 0; }
.thumb { flex: none; border: 1px solid #9aadc2; border-bottom-width: 2px; border-radius: 1px; background: linear-gradient(#f2f6fb, #dbe6f1); display: flex; align-items: center; justify-content: center; }
.thumb::after { content: ""; width: 8px; height: 6px; background: linear-gradient(transparent 2px, #e6eef6 2px 4px, transparent 4px), repeating-linear-gradient(90deg, #9fb3c8 0 2px, transparent 2px 3px); }
.track { flex: 1; background: #fafafb; }
.hscroll { display: flex; gap: 3px; margin: 2px 2px 0 149px; height: 23px; }
.hscroll .thumb { width: 33px; height: 24px; margin-left: 1px; }
.vscroll { display: flex; flex-direction: column; gap: 3px; height: 563px; width: 24px; margin-top: -1px; }
.vscroll .thumb { width: 23px; height: 21px; margin-top: 1px; }
.vscroll .track { width: 23px; }

.tools { display: flex; gap: 12px; margin: 20px 0 0 33px; height: 28px; }
.grp { display: flex; gap: 1px; }
.grp.off, .btn.off { opacity: .5; }
.defaults { width: 175px; margin-left: 132px; }
.planning { width: 197px; }
.detail { display: flex; margin-top: 28px; height: 28px; }
.detail label { width: 155px; height: 27px; padding: 3px 0 0 4px; border-bottom: 1px solid #b3b8be; font-size: 16px; }
.item { width: 450px; margin: 1px 34px 0 0; padding: 0 4px 2px 5px; }
.nav { margin-right: 1px; padding-right: 1px; }
.nav svg { width: 17px; height: 11px; }
.down svg { transform: rotate(180deg); }

.status { flex: 1; display: flex; background: linear-gradient(#fff, #fbfbfb 30px, #e4e4e4); padding: 2px 0 0 20px; }
.message { width: 336px; height: 33px; padding: 4px; border: 1px solid #cbd6e4; border-bottom: 0; border-radius: 3px; background: linear-gradient(#f0f5fa, #fff); }
.message div { height: 25px; width: 328px; margin: -1px 0 0 -1px; background: #bbdaa9; display: flex; align-items: center; color: #1d3816; white-space: nowrap; padding: 0 0 2px 3px; }
.message svg { width: 22px; height: 22px; margin: 1px 7px 0 0; }
.message span { letter-spacing: -.05px; }
.message em { font-style: normal; font-weight: 400; font-size: 15.700px; }
.sap { width: 58px; height: 27px; margin: 3px 490px 0 573px; }
.sap text { font: bold 24px "Liberation Sans", Arial, sans-serif; fill: #fff; stroke: #fff; stroke-width: .6px; }
.sys { display: flex; align-items: center; height: 36px; white-space: nowrap; font-weight: 400; }
.sys span { border-left: 1px solid #d8d8d8; height: 24px; padding: 0 0 0 9px; display: flex; align-items: center; }
.play { width: 12px; height: 19px; margin-right: 9px; }
.sys .c1 { width: 130px; } .c1 .caret { margin: -4px 0 0 7px; }
.c2 { width: 85px; } .c3 { width: 45px; } .c4 { width: 38px; } .c5 { width: 58px; }
.sys .c5 { padding-left: 15px; }
.c4 svg { width: 18px; height: 20px; margin-top: -4px; } .c5 svg { width: 25px; height: 19px; margin-top: -4px; } .c6 svg { margin-top: -2px; }

.taskbar { height: 60px; display: flex; color: #fff; font-weight: 400; background: linear-gradient(90deg, #050505, #0c0a08 250px, #1b1009 420px, #35291f 560px, #383330 700px, #353535 1000px, #353535 1760px, #050505 1900px, #000); }
.start { padding: 18px 0 0 24px; width: 81px; }
.start svg { width: 24px; height: 24px; }
.bars { width: 5px; height: 36px; margin-top: 12px; border: 1px solid #555; border-width: 0 1px; flex: none; }
.apps { display: flex; margin-left: 18px; gap: 2px; }
.app { width: 73px; height: 60px; padding-top: 12px; display: flex; justify-content: center; background: linear-gradient(#ffb9a8, #ffb9a8) center bottom / 61px 3px no-repeat; }
.app svg { width: 36px; height: 36px; }
.app.plain { background: none; }
.app.hot { background: linear-gradient(#ff7200, #ff7200) bottom / 73px 3px no-repeat, linear-gradient(90deg, #ab5f24 66px, #8b4a16 66px 68px, #ab5f24 68px); }
.app.on { background: linear-gradient(#ffb9a8, #ffb9a8) bottom / 73px 3px no-repeat, linear-gradient(90deg, #5b5c59 66px, #41413e 66px 68px, #656663 68px); }
.tl { font: bold 15px "Open Sans", sans-serif; fill: #fff; text-anchor: middle; }
.pc { font-size: 13px; }
.mini { font-size: 9px; }
.tray { display: flex; margin-left: auto; }
.ime { width: 24px; height: 24px; margin: 3px 22px 0 15px; background: #fff; color: #111; border: 1px solid #111; font-size: 20px; line-height: 21px; text-align: center; }
.t-up { width: 18px; height: 10px; margin: 25px 15px 0 0; }
.t-av { width: 24px; height: 24px; margin: 18px 12px 0 0; }
.t-bat { width: 24px; height: 18px; margin: 20px 16px 0 0; }
.t-wifi { width: 19px; height: 19px; margin: 22px 14px 0 0; }
.t-vol { width: 22px; height: 18px; margin: 21px 12px 0 0; }
.clock { width: 104px; padding-top: 2px; display: flex; flex-direction: column; align-items: center; font: 19.700px/28px "Open Sans", sans-serif; }
.t-note { width: 24px; height: 24px; margin: 18px 31px 0 24px; }
.desk { width: 7px; border-left: 1px solid #666; }

/* floating over the window */
.wintab { position: absolute; left: 1735px; top: 0; width: 180px; height: 46px; }
.meter { position: absolute; left: 1905px; top: 865px; width: 20px; height: 89px; border: 1px solid #35383f; border-radius: 6px; background: #545a69; }
.meter i { display: block; margin: 9px 0 0 5px; width: 7px; height: 69px; background: repeating-linear-gradient(transparent 0 2px, #4a4e5a 2px 3px), linear-gradient(#2f333d 18px, #e0a84a 18px, #d2d052 32px, #7ecb62 50px, #4fd0c0); }
```
